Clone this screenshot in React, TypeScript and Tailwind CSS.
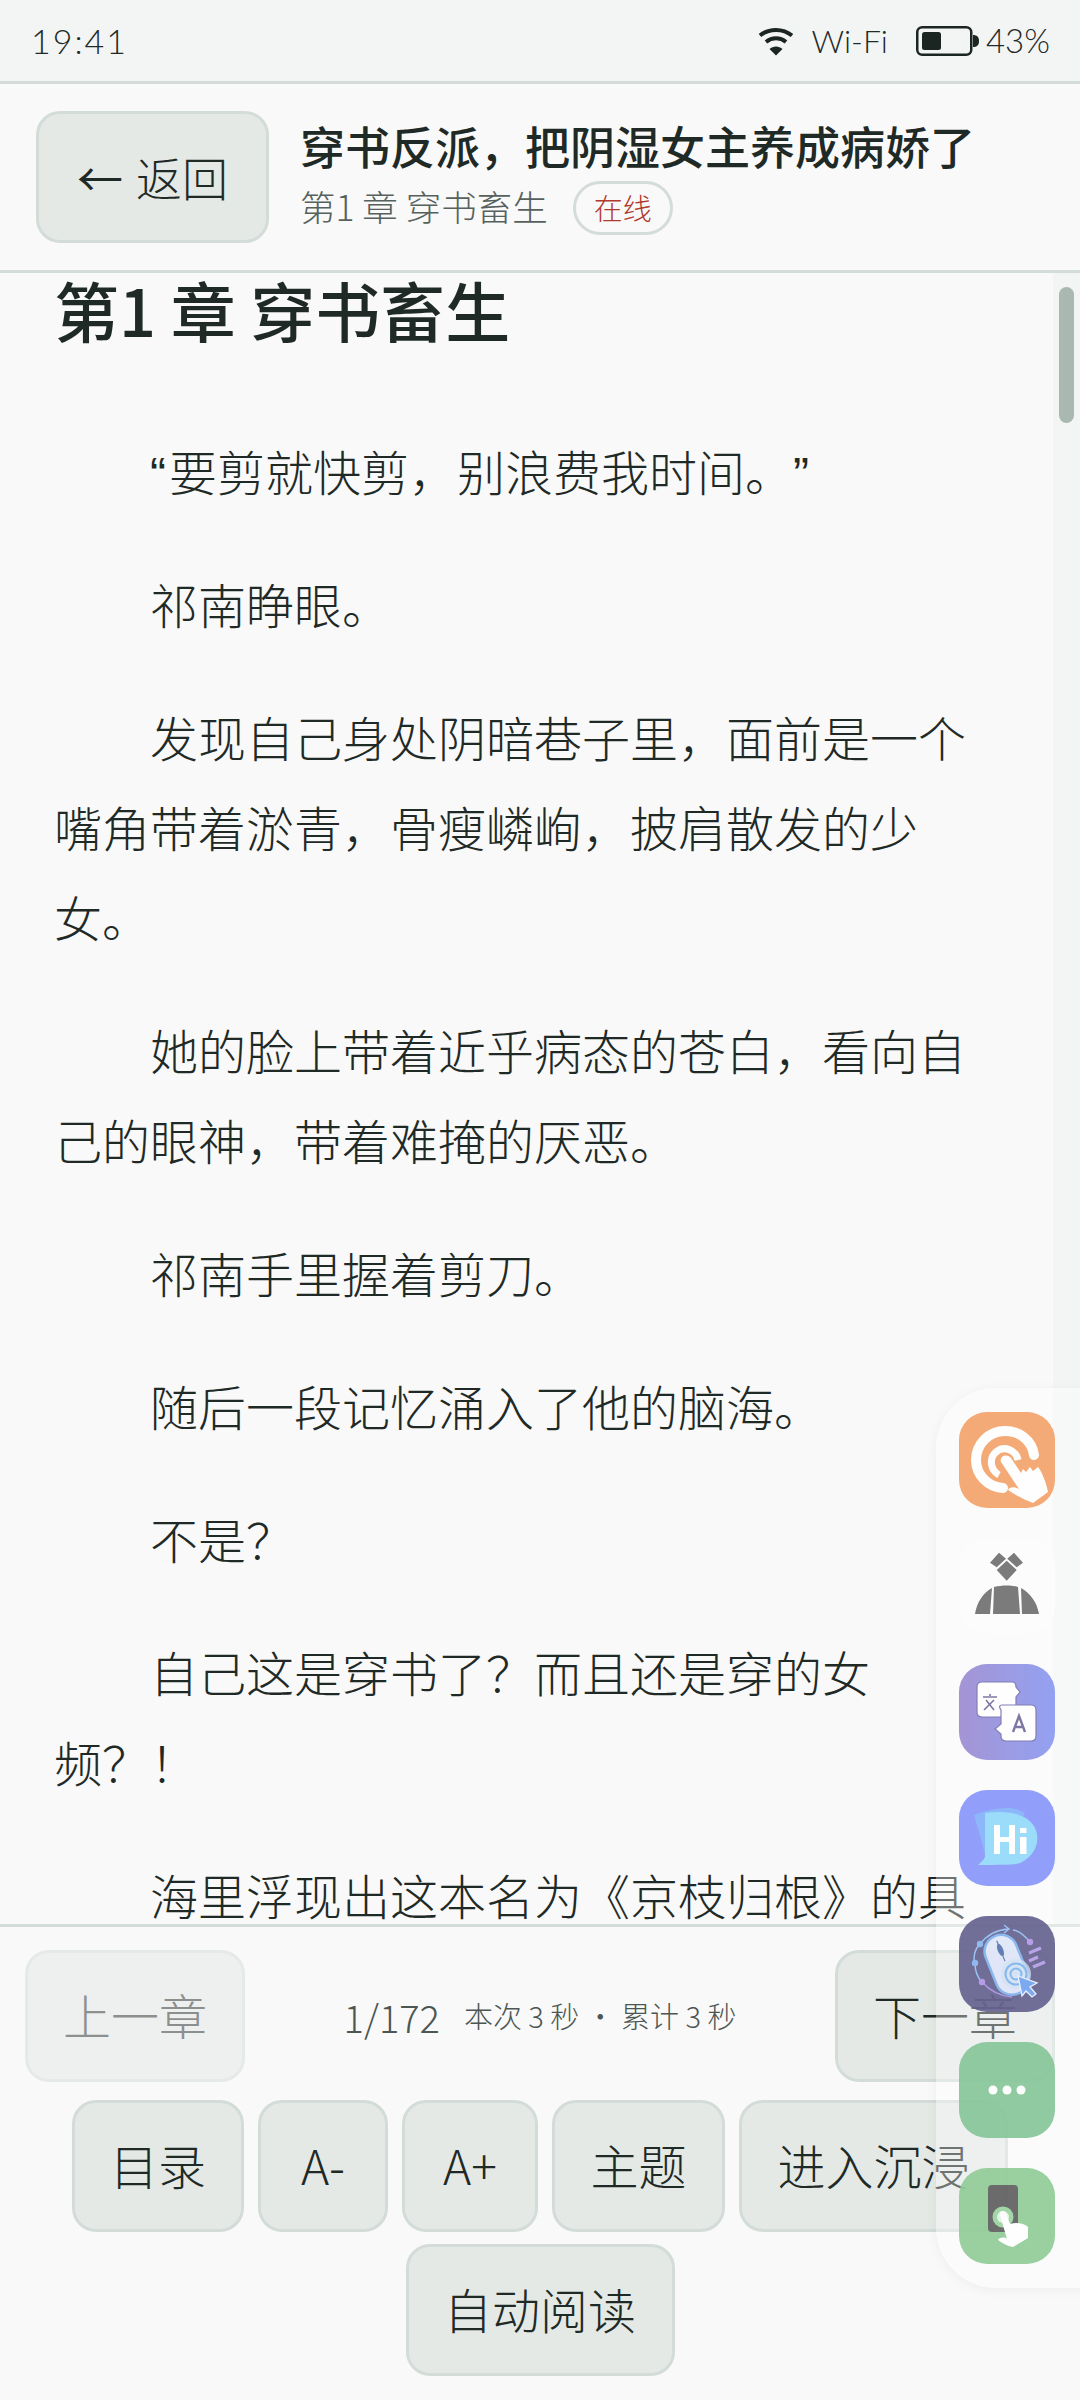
import React from 'react'

const FONT = "font-['Noto_Sans_CJK_SC','Noto_Sans',sans-serif]"

function Q({ children, className = '' }: { children: React.ReactNode; className?: string }) {
  return <span className={`font-['Liberation_Sans',sans-serif] leading-none ${className}`}>{children}</span>
}

const paragraphs: React.ReactNode[] = [
  <><Q className="pr-[3px]">“</Q>要剪就快剪，别浪费我时间。<Q>”</Q></>,
  '祁南睁眼。',
  '发现自己身处阴暗巷子里，面前是一个嘴角带着淤青，骨瘦嶙峋，披肩散发的少女。',
  '她的脸上带着近乎病态的苍白，看向自己的眼神，带着难掩的厌恶。',
  '祁南手里握着剪刀。',
  '随后一段记忆涌入了他的脑海。',
  '不是？',
  '自己这是穿书了？而且还是穿的女频？！',
  '海里浮现出这本名为《京枝归根》的具体内容，',
]

function Btn({ children, className = '' }: { children: React.ReactNode; className?: string }) {
  return (
    <button
      className={`h-[132px] rounded-[24px] border-[3px] border-[#d3dcd8] bg-[#e4e9e6] pb-[5px] text-[48px] font-light leading-none text-[#1f2a27] whitespace-nowrap ${className}`}
    >
      {children}
    </button>
  )
}

function WifiIcon() {
  return (
    <svg width="36" height="30" viewBox="0 0 36 30">
      <path d="M2 9.5C11 2 25 2 34 9.5" fill="none" stroke="#1b2522" strokeWidth="4" />
      <path d="M8 16C14 11 22 11 28 16" fill="none" stroke="#1b2522" strokeWidth="4" />
      <path d="M11.5 23L18 29.5L24.5 23C21 19.5 15 19.5 11.5 23Z" fill="#1b2522" />
    </svg>
  )
}

function BatteryIcon() {
  return (
    <svg width="64" height="30" viewBox="0 0 64 30">
      <rect x="1.25" y="1.25" width="54" height="27.5" rx="5" fill="none" stroke="#1b2522" strokeWidth="2.5" />
      <rect x="6" y="6" width="19" height="18" rx="2.5" fill="#1b2522" />
      <path d="M57 9C61 9 63 11 63 15C63 19 61 21 57 21Z" fill="#1b2522" />
    </svg>
  )
}

function TapIcon() {
  return (
    <svg viewBox="0 0 96 96" className="h-[96px] w-[96px]">
      <rect width="96" height="96" rx="28" fill="#f4a66f" />
      <path d="M75 43C73 28 60 19 46 19C30 19 17 32 17 48C17 63 29 75 44 76" fill="none" stroke="#fff" strokeWidth="10" strokeLinecap="round" />
      <path d="M40 63C31 58 30 46 37 40C45 33 57 38 59 48" fill="none" stroke="#fff" strokeWidth="7" />
      <path d="M42 50C40 44 48 41 52 46L62 61L64 57L67 60L71 55L74 59L79 55C83 60 87 70 89 80L74 91C66 88 56 83 49 78C50 75 55 74 60 77Z" fill="#fff" />
    </svg>
  )
}

function PersonIcon() {
  return (
    <svg viewBox="0 0 96 96" className="h-[96px] w-[96px]">
      <rect width="96" height="96" rx="28" fill="#fcfcfc" />
      <path d="M31 24.7L40 14.7L47 20.7L37.7 29.3Z M64 24.7L55 14.7L48.3 20.7L57.7 29.3Z" fill="#7b7b7b" />
      <path d="M47.7 22.7L57.7 32L47.7 42.7L37.7 32Z" fill="#7b7b7b" />
      <path d="M16 76C18 64 24 55 33 50L31 76Z M35 49C43 47 53 47 59 49L61 76H34Z M62 50C71 55 78 64 80 76H63Z" fill="#7b7b7b" />
    </svg>
  )
}

function TranslateIcon() {
  return (
    <svg viewBox="0 0 96 96" className="h-[96px] w-[96px]">
      <defs>
        <linearGradient id="tr" x1="0" x2="1" y1="0" y2="0">
          <stop offset="0" stopColor="#a08fd3" />
          <stop offset="1" stopColor="#8e9df2" />
        </linearGradient>
      </defs>
      <rect width="96" height="96" rx="28" fill="url(#tr)" />
      <path d="M23 18H53C56 18 57 20 57 23L61 28L57 33V46C57 49 56 53 53 53H23C20 53 18 51 18 48V23C18 20 20 18 23 18Z" fill="#fff" stroke="#7d78b0" strokeWidth="1.2" />
      <path d="M43 41H72C75 41 77 43 77 46V72C77 75 75 77 72 77H47C44 77 42 75 42 72V70L36 65L42 60V46C40 43 40 41 43 41Z" fill="#fff" stroke="#7d78b0" strokeWidth="1.2" />
      <path d="M31 30V32M24 33H38M27 36L35 46M35 36L25 46" fill="none" stroke="#77729f" strokeWidth="1.6" />
      <path d="M54 68L60 52L66 68M56.5 63H63.5" fill="none" stroke="#77729f" strokeWidth="2.4" />
    </svg>
  )
}

function HiIcon() {
  return (
    <svg viewBox="0 0 96 96" className="h-[96px] w-[96px]">
      <rect width="96" height="96" rx="28" fill="#8c9bfa" />
      <path d="M15 25C26 21 37 18 48 18C55 18 61 20 66 23L40 72L26 65C23 52 19 38 15 25Z" fill="#87b5fa" />
      <path d="M26 23C50 20 67 24 75 36C82 48 78 64 63 72C58 75 50 75 19 75C22 72 25 70 26 67Z" fill="#96dbfb" />
      <path d="M35 35H41V47H50V35H56V64H50V52H41V64H35Z M61 47H67.5V64H61Z M61 38H67.5V43H61Z" fill="#fff" />
    </svg>
  )
}

function MouseIcon() {
  return (
    <svg viewBox="0 0 96 96" className="h-[96px] w-[96px]">
      <rect width="96" height="96" rx="28" fill="#635f8e" />
      <path d="M49 13C37 14 28 19 21 28" fill="none" stroke="#93bdf3" strokeWidth="1.5" />
      <path d="M45 9L50 13L45 17" fill="none" stroke="#93bdf3" strokeWidth="1.5" />
      <path d="M54 14C61 15 66 20 71 26" fill="none" stroke="#93bdf3" strokeWidth="1.5" />
      <path d="M21 28C15 34 14 42 16 47C16 54 18 61 23 66" fill="none" stroke="#93bdf3" strokeWidth="1.5" />
      <path d="M23 66C31 75 41 80 53 81" fill="none" stroke="#a58fe0" strokeWidth="1.5" />
      <circle cx="21" cy="28" r="3.2" fill="#86b3ee" />
      <circle cx="16" cy="47" r="3.2" fill="#86b3ee" />
      <circle cx="23" cy="66" r="3.2" fill="#b193e6" />
      <circle cx="71" cy="26" r="3.2" fill="#b193e6" />
      <g transform="rotate(-22 47 49)">
        <rect x="31" y="18" width="33" height="62" rx="16.5" fill="#dfe6f8" stroke="#7fb1ee" strokeWidth="2.5" />
        <path d="M47.5 23V45" stroke="#5573b0" strokeWidth="1.2" />
        <ellipse cx="47.5" cy="33" rx="2.8" ry="6.5" fill="#5573b0" />
      </g>
      <circle cx="57" cy="58" r="15" fill="#cfe0f5" opacity="0.75" />
      <circle cx="57" cy="58" r="10.5" fill="none" stroke="#7db3ec" strokeWidth="2" />
      <circle cx="57" cy="58" r="5.5" fill="none" stroke="#7db3ec" strokeWidth="2" />
      <path d="M59 60L78 67L71 71L77 78L73 81L67 75L63 80Z" fill="#6fa3f2" stroke="#eaf1ff" strokeWidth="1.3" />
      <path d="M70 37L82 32M70 45L79 41M74 51L86 46" stroke="#b39ce6" strokeWidth="3.2" />
    </svg>
  )
}

function MoreIcon() {
  return (
    <svg viewBox="0 0 96 96" className="h-[96px] w-[96px]">
      <rect width="96" height="96" rx="28" fill="#84c597" />
      <circle cx="34" cy="48" r="4.5" fill="#fff" />
      <circle cx="48" cy="48" r="4.5" fill="#fff" />
      <circle cx="62" cy="48" r="4.5" fill="#fff" />
    </svg>
  )
}

function PhoneTapIcon() {
  return (
    <svg viewBox="0 0 96 96" className="h-[96px] w-[96px]">
      <rect width="96" height="96" rx="28" fill="#90cc96" />
      <rect x="29" y="17" width="30" height="47" rx="4" fill="#5d5d5d" />
      <circle cx="44" cy="49" r="10.5" fill="#9ad3a0" />
      <circle cx="44" cy="49" r="6" fill="#e4f3e4" />
      <path d="M41 47C40 42 45 42 47 45L51 56C57 54 65 55 69 59L69 70L54 79C48 78 43 75 39 72C41 69 46 69 48 71Z" fill="#fff" />
    </svg>
  )
}

export default function App() {
  return (
    <div className={`relative flex h-[2400px] w-[1080px] flex-col overflow-hidden bg-[#f9f9f9] text-[#1f2a27] ${FONT}`}>
      {/* status bar */}
      <div className="flex h-[84px] shrink-0 items-center justify-between border-b-[3px] border-[#d3dcd8] bg-[#f3f5f4] pl-[31px] pr-[30px] font-['Lato','Noto_Sans',sans-serif] text-[#1f2a27]">
        <span className="text-[34px] font-light tracking-[2px]">19:41</span>
        <div className="flex items-center">
          <WifiIcon />
          <span className="ml-[17px] text-[32px] font-light">Wi-Fi</span>
          <span className="ml-[28px] flex"><BatteryIcon /></span>
          <span className="ml-[6px] text-[33px] font-light">43%</span>
        </div>
      </div>

      {/* header */}
      <div className="flex h-[189px] shrink-0 items-center border-b-[3px] border-[#d3dcd8] pl-[36px]">
        <button className="flex h-[132px] w-[233px] items-center justify-center rounded-[24px] border-[3px] border-[#d3dcd8] bg-[#e4e9e6] pb-[3px] text-[46px] font-light leading-none text-[#1f2a27]">
          <span className="mr-[3px] font-normal">←</span>&nbsp;返回
        </button>
        <div className="ml-[31px] flex flex-col">
          <div className="text-[45px] font-medium leading-[54px]">穿书反派，把阴湿女主养成病娇了</div>
          <div className="mt-[8px] flex items-center">
            <span className="pb-[5px] text-[35.5px] font-light leading-[49px] text-[#56615d]">第1 章 穿书畜生</span>
            <span className="ml-[25px] flex h-[54px] w-[100px] items-center justify-center rounded-full border-[3px] border-[#d3dcd8] text-[29px] font-light text-[#b03a2e]">
              在线
            </span>
          </div>
        </div>
      </div>

      {/* reader */}
      <div className="flex min-h-0 flex-1">
        <div className="min-w-0 flex-1 overflow-hidden pl-[54px] pr-[55px]">
          <h1 className="text-[65px] font-medium leading-[72px]">第1 章 穿书畜生</h1>
          <div className="mt-[80px] text-[48px] font-light leading-[90px] text-[#1f2a27] [text-spacing-trim:space-all]">
            {paragraphs.map((p, i) => (
              <p key={i} className="mb-[43px] indent-[2em]">{p}</p>
            ))}
          </div>
        </div>
        <div className="w-[27px] shrink-0 bg-[#f3f5f4] px-[6px] pt-[14px]">
          <div className="h-[136px] w-[15px] rounded-full bg-[#aab8b2]" />
        </div>
      </div>

      {/* bottom controls */}
      <div className="h-[476px] shrink-0 border-t-[3px] border-[#d3dcd8] bg-[#f9f9f9] pt-[23px]">
        <div className="flex items-center justify-between px-[25px]">
          <Btn className="w-[220px] opacity-50">上一章</Btn>
          <div className="flex items-center font-light text-[#4c5753]">
            <span className="text-[38px]">1/172</span>
            <span className="ml-[24px] text-[29px]">本次 3 秒 · 累计 3 秒</span>
          </div>
          <Btn className="w-[220px]">下一章</Btn>
        </div>
        <div className="mt-[18px] flex flex-wrap justify-center gap-x-[14px] gap-y-[12px]">
          <Btn className="w-[172px]">目录</Btn>
          <Btn className="w-[130px]">A-</Btn>
          <Btn className="w-[136px]">A+</Btn>
          <Btn className="w-[173px]">主题</Btn>
          <Btn className="w-[269px]">进入沉浸</Btn>
          <Btn className="w-[269px]">自动阅读</Btn>
        </div>
      </div>

      {/* floating quick-launch panel */}
      <div className="absolute left-[936px] top-[1388px] flex h-[900px] w-[160px] flex-col gap-[30px] rounded-l-[60px] bg-white/35 pl-[23px] pt-[24px] shadow-[0_2px_12px_rgba(0,0,0,0.05)]">
        <div className="opacity-95"><TapIcon /></div>
        <div><PersonIcon /></div>
        <div className="opacity-95"><TranslateIcon /></div>
        <div className="opacity-95"><HiIcon /></div>
        <div className="opacity-90"><MouseIcon /></div>
        <div className="opacity-90"><MoreIcon /></div>
        <div className="opacity-90"><PhoneTapIcon /></div>
      </div>
    </div>
  )
}
